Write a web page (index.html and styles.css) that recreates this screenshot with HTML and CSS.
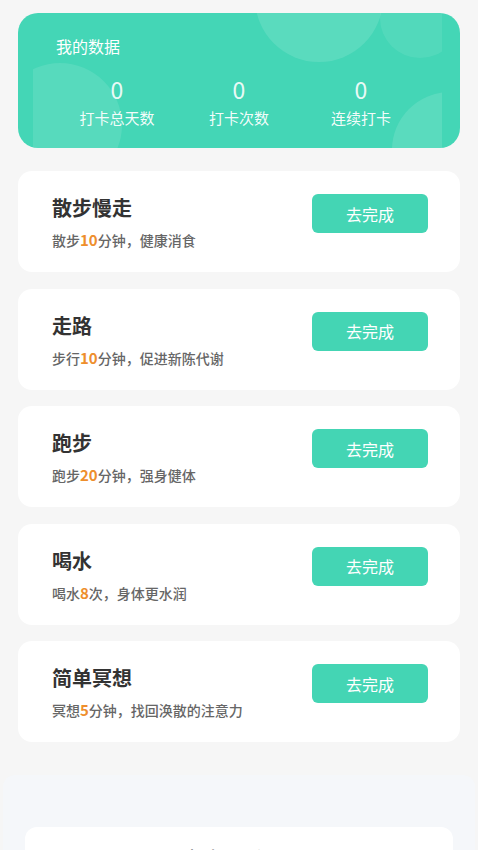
FILE: index.html
```html
<!DOCTYPE html>
<html lang="zh-CN">
<head>
<meta charset="utf-8">
<meta name="viewport" content="width=device-width, initial-scale=1">
<title>我的数据</title>
<link rel="stylesheet" href="styles.css">
</head>
<body>
<div class="page">
  <section class="stats">
    <div class="stats-deco">
      <span class="c c1"></span>
      <span class="c c2"></span>
      <span class="c c3"></span>
      <span class="c c4"></span>
    </div>
    <div class="stats-title">我的数据</div>
    <div class="stats-row">
      <div class="stat"><div class="stat-num">0</div><div class="stat-label">打卡总天数</div></div>
      <div class="stat"><div class="stat-num">0</div><div class="stat-label">打卡次数</div></div>
      <div class="stat"><div class="stat-num">0</div><div class="stat-label">连续打卡</div></div>
    </div>
  </section>

  <div class="tasks">
    <div class="task">
      <div class="task-info">
        <div class="task-title">散步慢走</div>
        <div class="task-desc">散步<b>10</b>分钟，健康消食</div>
      </div>
      <button class="task-btn">去完成</button>
    </div>
    <div class="task">
      <div class="task-info">
        <div class="task-title">走路</div>
        <div class="task-desc">步行<b>10</b>分钟，促进新陈代谢</div>
      </div>
      <button class="task-btn">去完成</button>
    </div>
    <div class="task">
      <div class="task-info">
        <div class="task-title">跑步</div>
        <div class="task-desc">跑步<b>20</b>分钟，强身健体</div>
      </div>
      <button class="task-btn">去完成</button>
    </div>
    <div class="task">
      <div class="task-info">
        <div class="task-title">喝水</div>
        <div class="task-desc">喝水<b>8</b>次，身体更水润</div>
      </div>
      <button class="task-btn">去完成</button>
    </div>
    <div class="task">
      <div class="task-info">
        <div class="task-title">简单冥想</div>
        <div class="task-desc">冥想<b>5</b>分钟，找回涣散的注意力</div>
      </div>
      <button class="task-btn">去完成</button>
    </div>
  </div>
</div>

<section class="panel">
  <div class="panel-card">
    <div class="panel-title">打卡日历记录</div>
  </div>
</section>
</body>
</html>
```

FILE: styles.css
```css
* { box-sizing: border-box; }

html, body {
  margin: 0;
  padding: 0;
  background: #f6f6f6;
  font-family: "Noto Sans CJK SC", "Noto Sans", sans-serif;
}

.page {
  padding: 13px 18px 0;
}

.stats {
  position: relative;
  background: #44d6b6;
  border-radius: 20px;
  padding: 22px 38px 20px;
  overflow: hidden;
  color: #fff;
}

.stats-deco {
  position: absolute;
  top: 0;
  bottom: 0;
  left: 15px;
  right: 18px;
  overflow: hidden;
}

.c {
  position: absolute;
  border-radius: 50%;
  background: rgba(255, 255, 255, 0.12);
}

.c1 { width: 128px; height: 128px; left: 222px; top: -79px; }
.c2 { width: 80px; height: 80px; left: 347px; top: -35px; background: rgba(255,255,255,0.08); }
.c3 { width: 124px; height: 124px; left: -35px; top: 50px; background: rgba(255,255,255,0.10); }
.c4 { width: 116px; height: 116px; left: 359px; top: 79px; background: rgba(255,255,255,0.12); }

.stats-title {
  position: relative;
  font-size: 16px;
  line-height: 22px;
  color: #fff;
}

.stats-row {
  position: relative;
  display: grid;
  grid-template-columns: repeat(3, 1fr);
  margin-top: 18px;
  text-align: center;
}

.stat-num {
  font-size: 23px;
  line-height: 28px;
  font-weight: 400;
  color: rgba(255, 255, 255, 0.9);
}

.stat-label {
  margin-top: 5px;
  font-size: 15px;
  line-height: 20px;
  color: rgba(255, 255, 255, 0.95);
}

.tasks {
  display: flex;
  flex-direction: column;
  gap: 16.5px;
  margin-top: 23px;
}

.task {
  display: flex;
  justify-content: space-between;
  align-items: flex-start;
  background: #fff;
  border-radius: 14px;
  padding: 23px 32px 21px 34px;
  height: 101px;
}

.task-title {
  font-size: 20px;
  line-height: 28px;
  font-weight: 700;
  color: #333;
}

.task-desc {
  margin-top: 8px;
  font-size: 14px;
  line-height: 20px;
  font-weight: 500;
  color: #666;
}

.task-desc b {
  color: #ee8e2c;
  font-weight: 700;
  font-size: 15px;
}

.task-btn {
  width: 116px;
  height: 39px;
  border: 0;
  border-radius: 6px;
  background: #44d5b4;
  color: #fff;
  font-family: inherit;
  font-size: 16px;
  padding: 0;
}

.panel {
  margin: 33px 3px 0;
  background: #f5f7fa;
  border-radius: 12px 12px 0 0;
  padding: 52px 22px 40px;
}

.panel-card {
  background: #fff;
  border-radius: 12px;
  padding: 18px 0 20px;
  text-align: center;
}

.panel-title {
  font-size: 17px;
  line-height: 24px;
  font-weight: 500;
  color: #999;
}
```
